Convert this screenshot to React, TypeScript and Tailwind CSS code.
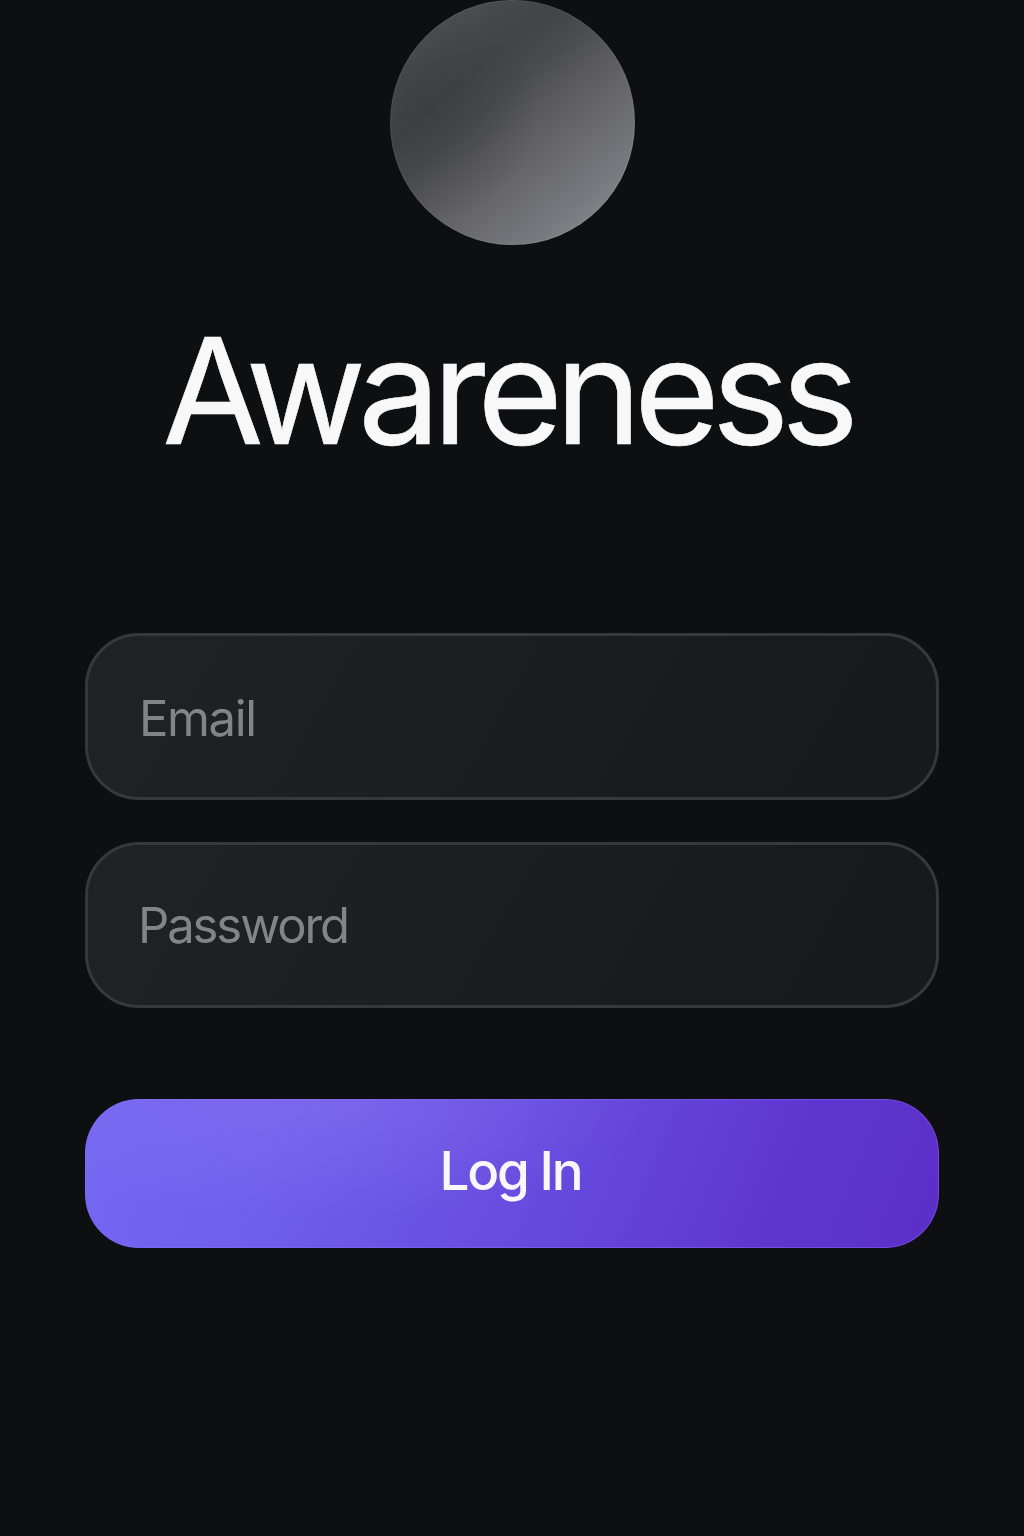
const fieldClass =
  "rounded-[54px] border-[3px] border-[#37383a] bg-[linear-gradient(120deg,#212224,#1d1e20_45%,#18191b_85%)] text-[49px] text-white outline-none placeholder:text-[#838487]";

export default function App() {
  return (
    <main className="flex h-[1536px] w-[1024px] flex-col items-center overflow-hidden bg-[#0e0f11] font-['Inter',sans-serif]">
      <div className="size-[245px] shrink-0 rounded-full bg-[radial-gradient(circle_at_15%_45%,rgba(50,51,54,0.35),transparent_45%),linear-gradient(140deg,#535457_8%,#47484b_22%,#434447_32%,#4a4b4f_42%,#59595e_52%,#68686d_65%,#78797e_80%,#8d8e93_94%)] shadow-[inset_0_0_1px_1px_rgba(255,255,255,0.08)]" />
      <h1 className="mt-[66px] -ml-[11px] text-[147px] leading-[160px] font-normal tracking-[-8px] whitespace-nowrap text-[#f8f8f8] [-webkit-text-stroke:0.6px_#f8f8f8]">Awareness</h1>
      <form className="mt-[162px] flex w-[854px] flex-col" onSubmit={(e) => e.preventDefault()}>
        <input
          type="email"
          placeholder="Email"
          className={`${fieldClass} h-[167px] px-[51px] pt-[3px] tracking-[-1.4px]`}
        />
        <input
          type="password"
          placeholder="Password"
          className={`${fieldClass} mt-[42px] h-[166px] px-[50px] pt-px tracking-[-2.1px]`}
        />
        <button
          type="submit"
          className="mt-[91px] h-[149px] rounded-[54px] bg-[radial-gradient(ellipse_340px_120px_at_27%_0%,rgba(144,118,236,0.38),transparent),linear-gradient(112deg,#7568f2_0%,#7060ed_22%,#6a53e4_42%,#6446db_60%,#5e36cf_80%,#5a2fc7_100%)] pr-[3px] pb-[3px] text-[53px] font-medium tracking-[-2.2px] text-[#f8f7fd] shadow-[inset_0_0_0_1px_rgba(145,105,255,0.45)]"
        >
          Log In
        </button>
      </form>
    </main>
  );
}
